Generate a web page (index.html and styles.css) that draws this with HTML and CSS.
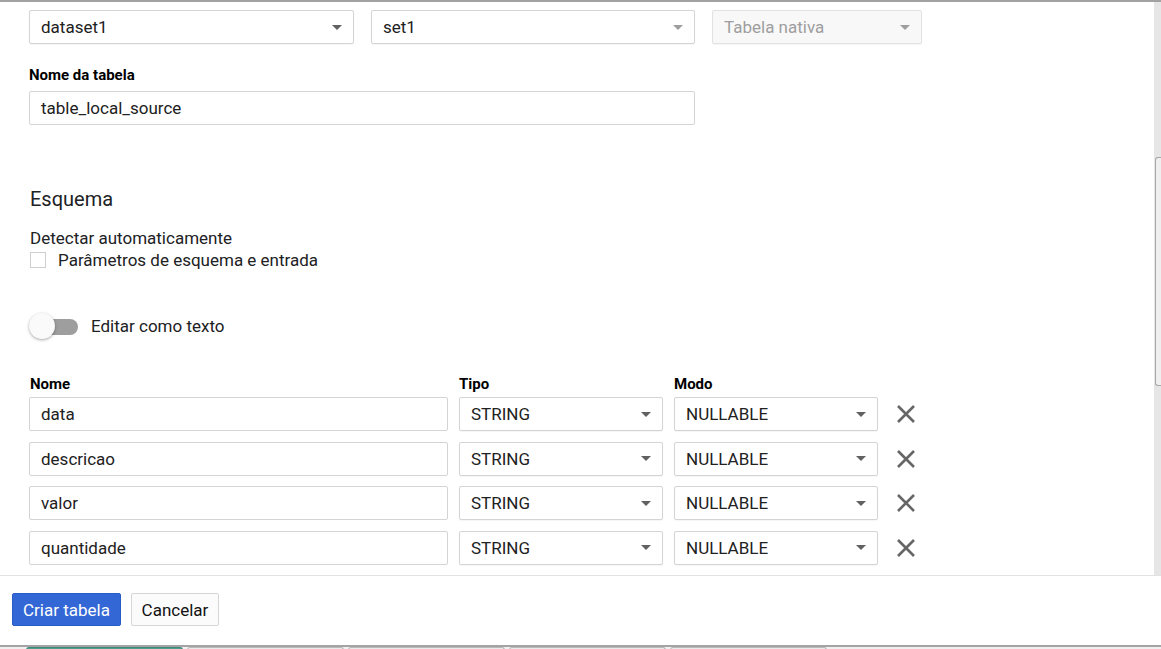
FILE: index.html
```html
<!DOCTYPE html>
<html lang="pt">
<head>
<meta charset="utf-8">
<title>Criar tabela</title>
<link rel="stylesheet" href="styles.css">
</head>
<body>
<div class="topline"></div>
<div class="main">
  <div class="content">
    <div class="row-top">
      <div class="select w-dataset"><span>dataset1</span><i class="caret"></i></div>
      <div class="select w-set"><span>set1</span><i class="caret light"></i></div>
      <div class="select w-tipo disabled"><span>Tabela nativa</span><i class="caret light"></i></div>
    </div>
    <div class="field-label">Nome da tabela</div>
    <div class="input w-nome">table_local_source</div>

    <h2 class="section-title">Esquema</h2>
    <div class="detect">Detectar automaticamente</div>
    <label class="check-row"><span class="checkbox"></span><span>Parâmetros de esquema e entrada</span></label>

    <div class="toggle-row">
      <span class="toggle"><span class="track"></span><span class="knob"></span></span>
      <span>Editar como texto</span>
    </div>

    <div class="schema">
      <div class="schema-head">
        <div class="c-nome">Nome</div>
        <div class="c-tipo">Tipo</div>
        <div class="c-modo">Modo</div>
      </div>
      <div class="schema-row">
        <div class="input c-nome">data</div>
        <div class="select c-tipo"><span>STRING</span><i class="caret"></i></div>
        <div class="select c-modo"><span>NULLABLE</span><i class="caret"></i></div>
        <svg class="close" viewBox="0 0 20 20"><path d="M2 2L18 18M18 2L2 18"/></svg>
      </div>
      <div class="schema-row">
        <div class="input c-nome">descricao</div>
        <div class="select c-tipo"><span>STRING</span><i class="caret"></i></div>
        <div class="select c-modo"><span>NULLABLE</span><i class="caret"></i></div>
        <svg class="close" viewBox="0 0 20 20"><path d="M2 2L18 18M18 2L2 18"/></svg>
      </div>
      <div class="schema-row">
        <div class="input c-nome">valor</div>
        <div class="select c-tipo"><span>STRING</span><i class="caret"></i></div>
        <div class="select c-modo"><span>NULLABLE</span><i class="caret"></i></div>
        <svg class="close" viewBox="0 0 20 20"><path d="M2 2L18 18M18 2L2 18"/></svg>
      </div>
      <div class="schema-row">
        <div class="input c-nome">quantidade</div>
        <div class="select c-tipo"><span>STRING</span><i class="caret"></i></div>
        <div class="select c-modo"><span>NULLABLE</span><i class="caret"></i></div>
        <svg class="close" viewBox="0 0 20 20"><path d="M2 2L18 18M18 2L2 18"/></svg>
      </div>
    </div>
  </div>
  <div class="scrollbar"><div class="thumb"></div></div>
</div>
<div class="footer">
  <button class="btn primary">Criar tabela</button>
  <button class="btn">Cancelar</button>
</div>
<div class="taskbar">
  <div class="tab active"></div>
  <div class="tab"></div>
  <div class="tab"></div>
  <div class="tab"></div>
  <div class="tab"></div>
</div>
</body>
</html>
```
FILE: styles.css
```css
* { box-sizing: border-box; }
html, body { margin: 0; padding: 0; }
body {
  width: 1161px;
  height: 649px;
  overflow: hidden;
  background: #fff;
  font-family: Roboto, "Liberation Sans", sans-serif;
  color: #202124;
}
.topline {
  height: 2px;
  background: #a2a2a2;
}
.main {
  display: flex;
  height: 573px;
}
.content {
  flex: 1;
  padding: 8px 0 0 29px;
}
.scrollbar {
  width: 7px;
  background: #e6e6e6;
  padding-top: 155px;
}
.thumb {
  height: 229px;
  margin-left: 1px;
  border: 1px solid #a8a8a8;
  border-right: none;
  border-radius: 3px 0 0 3px;
  background: #efefef;
}
.row-top {
  display: flex;
  gap: 17px;
}
.select, .input {
  height: 34px;
  border: 1px solid #d4d4d4;
  border-radius: 2px;
  font-size: 17px;
  line-height: 32px;
  padding: 0 11px;
  color: #212121;
  background: #fff;
  white-space: nowrap;
}
.select {
  display: flex;
  align-items: center;
  justify-content: space-between;
  box-shadow: 0 1px 1px rgba(0,0,0,0.04);
}
.select.disabled {
  background: #f8f8f8;
  color: #9e9e9e;
  border-color: #e2e2e2;
}
.caret {
  width: 0;
  height: 0;
  border-left: 5px solid transparent;
  border-right: 5px solid transparent;
  border-top: 5px solid #616161;
}
.caret.light { border-top-color: #9e9e9e; }
.w-dataset { width: 325px; }
.w-set { width: 324px; }
.w-tipo { width: 210px; }
.w-nome { width: 666px; }
.field-label {
  margin-top: 22px;
  font-size: 15px;
  font-weight: 700;
  line-height: 18px;
  height: 18px;
  color: #000;
}
.field-label + .input { margin-top: 7px; }
.section-title {
  margin: 62px 0 0 1px;
  font-size: 20px;
  font-weight: 400;
  line-height: 24px;
  color: #202124;
}
.detect {
  margin-top: 17px;
  font-size: 17px;
  line-height: 20px;
  padding-left: 1px;
}
.check-row {
  display: flex;
  align-items: center;
  gap: 12px;
  margin-top: 2px;
  font-size: 17px;
  line-height: 20px;
  padding-left: 1px;
}
.checkbox {
  width: 16px;
  height: 16px;
  border: 1px solid #cfcfcf;
  background: #fff;
}
.toggle-row {
  display: flex;
  align-items: center;
  gap: 13px;
  margin-top: 43px;
  font-size: 17px;
  line-height: 20px;
}
.toggle {
  position: relative;
  width: 49px;
  height: 26px;
  display: inline-block;
}
.track {
  position: absolute;
  left: 4px;
  top: 6px;
  width: 45px;
  height: 16px;
  border-radius: 8px;
  background: #9e9e9e;
}
.knob {
  position: absolute;
  left: 0;
  top: 0;
  width: 26px;
  height: 26px;
  border-radius: 50%;
  background: #fafafa;
  box-shadow: 0 1px 3px rgba(0,0,0,0.35);
}
.schema { margin-top: 36px; }
.schema-head {
  display: flex;
  gap: 11px;
  font-size: 15px;
  font-weight: 700;
  line-height: 18px;
  color: #000;
}
.schema-head .c-nome { width: 419px; padding-left: 1px; }
.schema-head .c-tipo { width: 204px; }
.schema-row {
  display: flex;
  align-items: center;
  gap: 11px;
  margin-top: 10.67px;
}
.schema-head + .schema-row { margin-top: 4px; }
.schema-row .c-nome { width: 419px; }
.schema-row .c-tipo { width: 204px; }
.schema-row .c-modo { width: 204px; }
.close {
  width: 20px;
  height: 20px;
  margin-left: 7px;
  stroke: #666;
  stroke-width: 2.6;
  fill: none;
}
.footer {
  height: 70px;
  border-top: 1px solid #e2e2e2;
  display: flex;
  align-items: flex-start;
  gap: 10px;
  padding: 17px 0 0 12px;
}
.btn {
  height: 33px;
  font-family: Roboto, "Liberation Sans", sans-serif;
  font-size: 17px;
  padding: 0;
  border-radius: 2px;
  border: 1px solid #d6d6d6;
  background: #fbfbfb;
  color: #111;
  cursor: pointer;
}
.btn.primary {
  width: 109px;
  background: #3367d6;
  border-color: #2a5cc7;
  color: #fff;
}
.btn:not(.primary) { width: 88px; }
.taskbar {
  height: 6px;
  border-top: 2px solid #a4a4a4;
  background: #f0f0f0;
  display: flex;
  gap: 4px;
  padding: 0 0 0 26px;
}
.tab {
  width: 157px;
  height: 4px;
  border: 1px solid #b8b8b8;
  border-bottom: none;
  border-radius: 3px 3px 0 0;
  background: #eaeaea;
}
.tab.active {
  background: #4e9c8c;
  border-color: #3e8a7a;
}
```
